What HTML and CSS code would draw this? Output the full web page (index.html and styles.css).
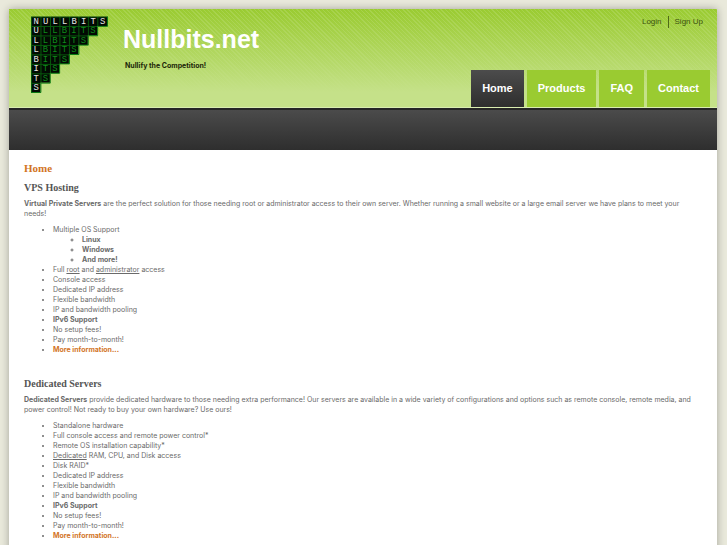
FILE: index.html
```
<!DOCTYPE html>
<html lang="en">
<head>
    <meta charset="UTF-8">
    <meta name="viewport" content="width=device-width, initial-scale=1.0">
    <title>Nullbits.net</title>
    <link rel="stylesheet" href="styles.css">
</head>
<body>

    <div class="wrapper">
        <header class="header">
            <div class="brand">
                <svg class="logo" width="77" height="78" viewBox="0 0 78 78" role="img" aria-label="Nullbits">
                    <defs>
                        <pattern id="cells" width="9.6" height="9.6" patternUnits="userSpaceOnUse">
                            <rect width="9.6" height="9.6" fill="#020a03"/>
                            <path d="M0 .5H9.6M.5 0V9.6" stroke="#075a0c"/>
                        </pattern>
                    </defs>
                    <path d="M0 0H77.5V9.6H67.2V19.2H57.6V28.8H48V38.4H38.4V48H28.8V57.6H19.2V67.2H9.6V77.5H0Z" fill="url(#cells)"/>
                    <path d="M77.5 0V10H67.5V19.5H58V29H48.5V38.5H39V48H29V57.5H19.5V67.5H10V77H0" fill="none" stroke="#0b7a12"/>
                    <g class="logo-dim">
                        <text y="17" x="12 21.6 31.2 40.8 50.4 60">LLBITS</text>
                        <text y="26.6" x="12 21.6 31.2 40.8 50.4">LBITS</text>
                        <text y="36.2" x="12 21.6 31.2 40.8">BITS</text>
                        <text y="45.8" x="12 21.6 31.2">ITS</text>
                        <text y="55.4" x="12 21.6">TS</text>
                        <text y="65" x="12">S</text>
                    </g>
                    <g class="logo-lit">
                        <text y="7.6" x="2.6 12.2 21.8 31.4 41 50.6 60.2 69.8">NULLBITS</text>
                        <text y="17 26.6 36.2 45.8 55.4 65 74.6" x="2.6 2.6 2.6 2.6 2.6 2.6 2.6">ULLBITS</text>
                    </g>
                </svg>
                <div class="brand-text">
                    <h1>Nullbits.net</h1>
                    <p>Nullify the Competition!</p>
                </div>
            </div>
            <div class="header-right">
                <div class="account">
                    <a href="#">Login</a>
                    <a href="#">Sign Up</a>
                </div>
                <nav class="menu">
                    <a class="active" href="#">Home</a>
                    <a href="#">Products</a>
                    <a href="#">FAQ</a>
                    <a href="#">Contact</a>
                </nav>
            </div>
        </header>
        <div class="bar"></div>

        <main class="content">
            <h2>Home</h2>

            <section>
                <h3>VPS Hosting</h3>
                <p><strong>Virtual Private Servers</strong> are the perfect solution for those needing root or administrator access to their own server. Whether running a small website or a large email server we have plans to meet your needs!</p>
                <ul>
                    <li>Multiple OS Support
                        <ul>
                            <li><strong>Linux</strong></li>
                            <li><strong>Windows</strong></li>
                            <li><strong>And more!</strong></li>
                        </ul>
                    </li>
                    <li>Full <u>root</u> and <u>administrator</u> access</li>
                    <li>Console access</li>
                    <li>Dedicated IP address</li>
                    <li>Flexible bandwidth</li>
                    <li>IP and bandwidth pooling</li>
                    <li><strong>IPv6 Support</strong></li>
                    <li>No setup fees!</li>
                    <li>Pay month-to-month!</li>
                    <li><a href="#">More information...</a></li>
                </ul>
            </section>

            <section>
                <h3>Dedicated Servers</h3>
                <p><strong>Dedicated Servers</strong> provide dedicated hardware to those needing extra performance! Our servers are available in a wide variety of configurations and options such as remote console, remote media, and power control! Not ready to buy your own hardware? Use ours!</p>
                <ul>
                    <li>Standalone hardware</li>
                    <li>Full console access and remote power control*</li>
                    <li>Remote OS installation capability*</li>
                    <li><u>Dedicated</u> RAM, CPU, and Disk access</li>
                    <li>Disk RAID*</li>
                    <li>Dedicated IP address</li>
                    <li>Flexible bandwidth</li>
                    <li>IP and bandwidth pooling</li>
                    <li><strong>IPv6 Support</strong></li>
                    <li>No setup fees!</li>
                    <li>Pay month-to-month!</li>
                    <li><a href="#">More information...</a></li>
                </ul>
            </section>
        </main>
    </div>

</body>
</html>
```
FILE: styles.css
```
body {
    font-family: "Liberation Sans", Arial, sans-serif;
    font-size: 8px;
    line-height: 10px;
    color: #6a6a6a;
    background-color: #e9e9db;
    margin: 0;
    padding: 9px 10px 0 9px;
}

h1, h2, h3, p, ul {
    margin: 0;
    padding: 0;
}

.wrapper {
    background-color: #fff;
    box-shadow: 0 0 8px rgba(0, 0, 0, 0.3);
}

.header {
    display: flex;
    justify-content: space-between;
    background:
        linear-gradient(rgba(197, 225, 137, 0), #c5e189 85%),
        repeating-linear-gradient(45deg, #9acb31 0, #9acb31 2px, #a6d24a 2px, #a6d24a 3px);
    border-bottom: 1px solid #d9edb0;
}

.brand {
    display: flex;
    gap: 15px;
    padding: 7px 0 0 22px;
}

.brand-text {
    padding-top: 8px;
}

.brand h1 {
    font-size: 25px;
    line-height: 30px;
    color: #fff;
}

.brand p {
    font-family: Inter, "Liberation Sans", sans-serif;
    font-size: 7px;
    font-weight: bold;
    color: #1c2608;
    padding: 7px 2px 0;
}

.logo {
    display: block;
}

.logo text {
    font-family: "Liberation Mono", monospace;
    font-size: 9px;
}

.logo-lit {
    fill: #e6e6e6;
}

.logo-dim {
    fill: #0e8a1a;
}

.header-right {
    display: flex;
    flex-direction: column;
    justify-content: space-between;
    align-items: flex-end;
    gap: 42px;
    padding: 7px 7px 0 0;
}

.account {
    display: flex;
    padding-right: 7px;
}

.account a {
    color: #3c5210;
    text-decoration: none;
    line-height: 12px;
}

.account a + a {
    border-left: 1px solid #4e6a18;
    margin-left: 6px;
    padding-left: 6px;
}

.menu {
    display: flex;
    gap: 3px;
}

.menu a {
    font-size: 11px;
    font-weight: bold;
    line-height: 37px;
    padding: 0 11px;
    color: #fff;
    background-color: #9acb31;
    text-decoration: none;
}

.menu a.active {
    background: linear-gradient(#4c4c4c, #2e2e2e);
}

.bar {
    height: 40px;
    background: linear-gradient(#4b4b4b, #2e2e2e);
    border-top: 2px solid #262626;
}

.content {
    font-family: Inter, "Liberation Sans", sans-serif;
    font-size: 7px;
    padding: 12px 15px 0;
}

.content h2 {
    font-family: "Liberation Serif", "Times New Roman", serif;
    font-size: 11px;
    line-height: 12px;
    color: #d2741f;
    margin-bottom: 8px;
}

.content h3 {
    font-family: "Liberation Serif", "Times New Roman", serif;
    font-size: 10px;
    line-height: 12px;
    color: #555;
    margin-bottom: 5px;
}

.content ul {
    padding-left: 29px;
    margin: 6px 0 23px;
}

.content ul ul {
    margin: 0;
}

.content a {
    font-weight: bold;
    color: #d2741f;
    text-decoration: none;
}

.content section:last-child {
    padding-bottom: 20px;
}
```
